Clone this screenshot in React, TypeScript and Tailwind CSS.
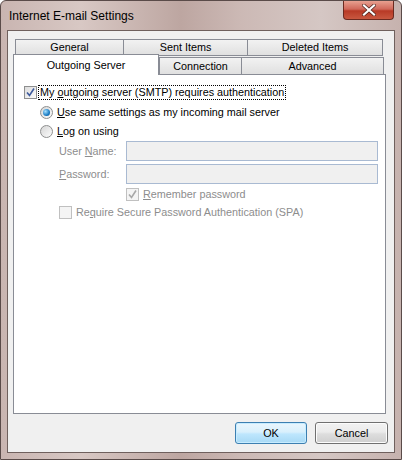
import React from "react";

const font = { fontFamily: '"Liberation Sans", Arial, sans-serif' };

function CheckBox({ checked, disabled }: { checked?: boolean; disabled?: boolean }) {
  return (
    <div
      className={
        "w-[13px] h-[13px] shrink-0 border flex items-center justify-center " +
        (disabled ? "border-[#c0c0c0] bg-[#f4f4f4]" : "border-[#8e8f8f] bg-gradient-to-br from-[#dcdcdc] to-[#fbfbfb]")
      }
    >
      {checked && (
        <svg width="11" height="11" viewBox="0 0 11 11">
          <path
            d="M2 5.5 L4.5 8.5 L9 1.5"
            fill="none"
            stroke={disabled ? "#a8a8a8" : "#3d5a9c"}
            strokeWidth="1.6"
          />
        </svg>
      )}
    </div>
  );
}

function Radio({ checked }: { checked?: boolean }) {
  return (
    <div className="w-[13px] h-[13px] shrink-0 rounded-full border border-[#8e8f8f] bg-gradient-to-br from-[#d6d6d6] to-[#fcfcfc] flex items-center justify-center">
      {checked && (
        <div className="w-[7px] h-[7px] rounded-full bg-[radial-gradient(circle_at_35%_35%,#a6e0ff,#1a7cc4_60%,#0b4f86)]" />
      )}
    </div>
  );
}

export default function App() {
  return (
    <div className="w-[402px] h-[460px] bg-white" style={font}>
      <div className="w-[402px] h-[460px] flex flex-col rounded-t-[6px] border border-[#5a4b49] bg-[linear-gradient(90deg,#c9b5b1_0%,#d8c8c4_20%,#bda6a1_45%,#ccb9b5_60%,#d5c7c4_80%,#c6b2ae_100%)] relative">
        {/* Title bar */}
        <div className="h-[29px] flex items-center pl-[8px] text-[12px] text-black">
          Internet E-mail Settings
        </div>
        <div className="absolute right-[7px] top-0 w-[51px] h-[19px] rounded-b-[4px] border border-t-0 border-[#6b2a20] bg-[linear-gradient(180deg,#e8a090_0%,#d0685a_45%,#b83a26_55%,#c85840_100%)] flex items-center justify-center">
          <svg width="14" height="12" viewBox="0 0 14 12">
            <path d="M2 1.5 L12 10.5 M12 1.5 L2 10.5" stroke="#4a2018" strokeWidth="3.6" strokeLinecap="square" />
            <path d="M2 1.5 L12 10.5 M12 1.5 L2 10.5" stroke="#ffffff" strokeWidth="2.2" strokeLinecap="square" />
          </svg>
        </div>
        {/* Client area */}
        <div className="mx-[6px] h-[423px] border border-[#6f605d] bg-[#f0f0f0] flex flex-col">
          <div className="pl-[5px] pt-[8px] flex flex-col text-[10.8px] text-black">
            {/* Tabs row 1 */}
            <div className="flex pl-[2px] h-[17px]">
              <div className="w-[109px] h-[17px] border border-[#898c95] bg-[linear-gradient(180deg,#f2f2f2,#e0e0e0)] flex items-center justify-center">General</div>
              <div className="w-[125px] h-[17px] -ml-px border border-[#898c95] bg-[linear-gradient(180deg,#f2f2f2,#e0e0e0)] flex items-center justify-center">Sent Items</div>
              <div className="w-[136px] h-[17px] -ml-px border border-[#898c95] bg-[linear-gradient(180deg,#f2f2f2,#e0e0e0)] flex items-center justify-center">Deleted Items</div>
            </div>
            {/* Tabs row 2 */}
            <div className="flex items-end h-[19px] -mb-px relative z-10">
              <div className="w-[146px] h-[21px] border border-b-0 border-[#898c95] bg-white flex items-start pt-[2px] justify-center">Outgoing Server</div>
              <div className="w-[83px] h-[18px] border border-[#898c95] bg-[linear-gradient(180deg,#f2f2f2,#e0e0e0)] flex items-center justify-center">Connection</div>
              <div className="w-[143px] h-[18px] -ml-px border border-[#898c95] bg-[linear-gradient(180deg,#f2f2f2,#e0e0e0)] flex items-center justify-center">Advanced</div>
            </div>
            {/* Panel */}
            <div className="w-[373px] h-[340px] border border-[#898c95] bg-white flex flex-col pl-[10px] pt-[10px]">
              <div className="flex items-center h-[14px]">
                <CheckBox checked />
                <span className="ml-[1px] px-[1px] border border-dotted border-black leading-[13px]">
                  My <u>o</u>utgoing server (SMTP) requires authentication
                </span>
              </div>
              <div className="flex items-center h-[14px] mt-[6px] pl-[16px]">
                <Radio checked />
                <span className="ml-[4px]"><u>U</u>se same settings as my incoming mail server</span>
              </div>
              <div className="flex items-center h-[14px] mt-[5px] pl-[16px]">
                <Radio />
                <span className="ml-[4px]"><u>L</u>og on using</span>
              </div>
              <div className="flex items-center h-[20px] mt-[3px] pl-[35px]">
                <span className="w-[67px] text-[#8d8d8d]">User <u>N</u>ame:</span>
                <div className="w-[252px] h-[20px] border border-[#a9bad2] bg-[#f0f0f0]" />
              </div>
              <div className="flex items-center h-[20px] mt-[3px] pl-[35px]">
                <span className="w-[67px] text-[#8d8d8d]"><u>P</u>assword:</span>
                <div className="w-[252px] h-[20px] border border-[#a9bad2] bg-[#f0f0f0]" />
              </div>
              <div className="flex items-center h-[13px] mt-[4px] pl-[102px]">
                <CheckBox checked disabled />
                <span className="ml-[4px] text-[#8d8d8d]"><u>R</u>emember password</span>
              </div>
              <div className="flex items-center h-[13px] mt-[5px] pl-[35px]">
                <CheckBox disabled />
                <span className="ml-[4px] text-[#8d8d8d]">Re<u>q</u>uire Secure Password Authentication (SPA)</span>
              </div>
            </div>
          </div>
          {/* Buttons */}
          <div className="flex justify-end gap-[8px] pr-[6px] mt-[8px] text-[10.8px] text-black">
            <div className="w-[72px] h-[22px] rounded-[3px] border border-[#3c7fb1] bg-[linear-gradient(180deg,#eaf6fd_0%,#d9f0fc_45%,#bee6fd_55%,#a7d9f5_100%)] shadow-[inset_0_0_0_1px_#c7ecff] flex items-center justify-center">OK</div>
            <div className="w-[73px] h-[22px] rounded-[3px] border border-[#707070] bg-[linear-gradient(180deg,#f2f2f2_0%,#ebebeb_45%,#dddddd_55%,#cfcfcf_100%)] shadow-[inset_0_0_0_1px_#fcfcfc] flex items-center justify-center">Cancel</div>
          </div>
        </div>
      </div>
    </div>
  );
}
